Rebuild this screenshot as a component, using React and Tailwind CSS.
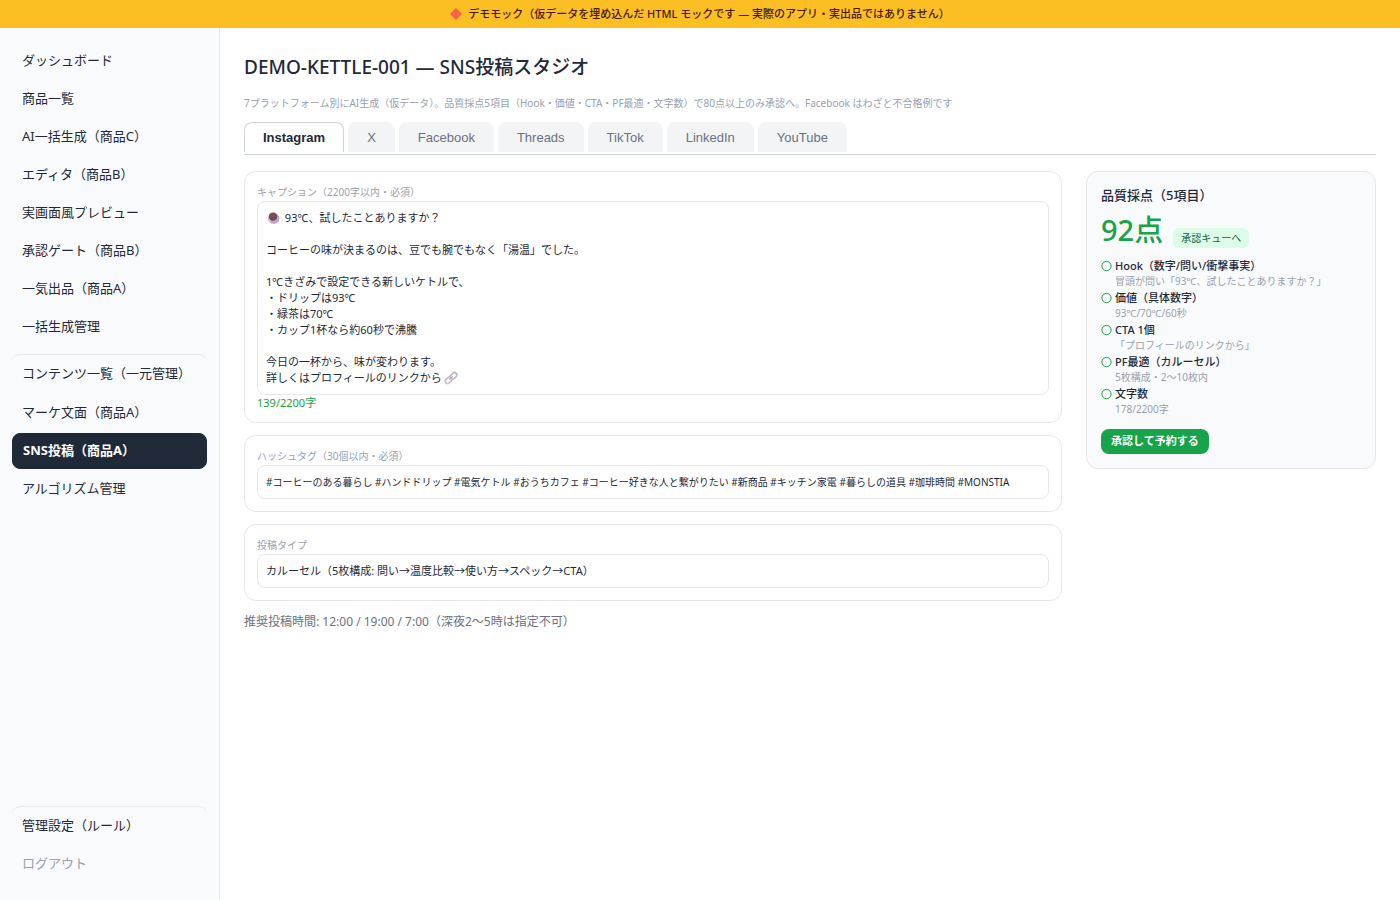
import { useState } from "react";

const mainLinks = [
  "ダッシュボード",
  "商品一覧",
  "AI一括生成（商品C）",
  "エディタ（商品B）",
  "実画面風プレビュー",
  "承認ゲート（商品B）",
  "一気出品（商品A）",
  "一括生成管理",
];

const tabs = ["Instagram", "X", "Facebook", "Threads", "TikTok", "LinkedIn", "YouTube"];

const checks = [
  { title: "Hook（数字/問い/衝撃事実）", detail: "冒頭が問い「93℃、試したことありますか？」" },
  { title: "価値（具体数字）", detail: "93℃/70℃/60秒" },
  { title: "CTA 1個", detail: "「プロフィールのリンクから」" },
  { title: "PF最適（カルーセル）", detail: "5枚構成・2〜10枚内" },
  { title: "文字数", detail: "178/2200字" },
];

function NavLink({ children, className = "h-9 text-gray-800" }) {
  return (
    <a href="#" className={`flex items-center rounded-lg px-2.5 ${className}`}>
      {children}
    </a>
  );
}

function BeanIcon() {
  return (
    <svg viewBox="0 0 14 14" className="mr-0.5 inline-block size-3.5 align-[-3px]" aria-hidden="true">
      <circle cx="7.8" cy="7.4" r="5.6" fill="#b9a8cb" />
      <path d="M2.2 7.5a5.600 5.600 0 0 0 7.200 5.300C6.500 12 4 10 3 6Z" fill="#cbbfda" />
      <circle cx="7" cy="5.600" r="4.200" fill="#704a55" />
      <circle cx="6.800" cy="5" r="2.600" fill="#7d4f4c" />
    </svg>
  );
}

function ChainIcon() {
  return (
    <svg viewBox="0 0 14 14" className="ml-0.5 inline-block size-3.5 align-[-3px]" fill="none" strokeWidth="1.7" aria-hidden="true">
      <rect x="5.800" y="2.600" width="7.400" height="4.600" rx="2.300" transform="rotate(-45 9.500 4.900)" stroke="#c0b2cb" />
      <rect x="0.900" y="6.900" width="7.400" height="4.600" rx="2.300" transform="rotate(-45 4.600 9.200)" stroke="#c9bcd2" />
      <path d="M5.400 8.600 8.600 5.400" stroke="#b3a4c0" strokeWidth="1.200" />
    </svg>
  );
}

function Card({ children }) {
  return <div className="rounded-xl border border-gray-200 bg-white p-3">{children}</div>;
}

const labelClass = "block text-[10px] leading-[17px] text-gray-400";
const fieldClass = "block w-full rounded-lg border border-gray-200 bg-white px-2 py-2 leading-4 text-gray-800";

function App() {
  const [active, setActive] = useState("Instagram");
  return (
    <div className="flex min-h-screen flex-col bg-white font-['Noto_Sans','Noto_Sans_CJK_JP',sans-serif] text-gray-800">
      <div className="flex h-7 items-center justify-center gap-1.5 bg-[#fbbf24] text-[11px] font-medium text-amber-950">
        <svg viewBox="0 0 12 12" className="size-3" aria-hidden="true">
          <path d="M6 0 12 6 6 12 0 6Z" fill="#f2644b" />
        </svg>
        <span>デモモック（仮データを埋め込んだ HTML モックです — 実際のアプリ・実出品ではありません）</span>
      </div>

      <div className="flex flex-1">
        <nav className="flex w-[220px] shrink-0 flex-col gap-0.5 border-r border-gray-200 bg-gray-50 px-3 pt-[15px] pb-[18px] text-[13px]">
          {mainLinks.map((link) => (
            <NavLink key={link}>{link}</NavLink>
          ))}
          <NavLink className="mt-[7px] h-[39px] border-t border-gray-200 text-gray-800">コンテンツ一覧（一元管理）</NavLink>
          <NavLink>マーケ文面（商品A）</NavLink>
          <NavLink className="h-9 border border-[#1f2937] bg-[#1f2937] font-bold text-white">SNS投稿（商品A）</NavLink>
          <NavLink>アルゴリズム管理</NavLink>
          <NavLink className="mt-auto h-[38px] border-t border-gray-200 text-gray-800">管理設定（ルール）</NavLink>
          <NavLink className="h-9 text-gray-400">ログアウト</NavLink>
        </nav>

        <main className="min-w-0 flex-1 p-6">
          <h1 className="text-[19px] leading-[30px] font-medium">DEMO-KETTLE-001 — SNS投稿スタジオ</h1>
          <p className="mt-[13px] text-[10px] leading-4 text-gray-400">
            7プラットフォーム別にAI生成（仮データ）。品質採点5項目（Hook・価値・CTA・PF最適・文字数）で80点以上のみ承認へ。Facebook はわざと不合格例です
          </p>

          <div className="mt-[11px] mb-4 flex gap-1 border-b border-gray-300 pb-0.5 font-['Liberation_Sans',sans-serif] text-[13px]">
            {tabs.map((tab) => (
              <button
                key={tab}
                type="button"
                onClick={() => setActive(tab)}
                className={`h-[30px] rounded-t-lg border border-b-0 px-[18px] ${
                  tab === active
                    ? "border-gray-300 bg-white font-bold text-gray-800"
                    : "border-gray-100 bg-gray-100 text-gray-500"
                }`}
              >
                {tab}
              </button>
            ))}
          </div>

          <div className="flex items-start gap-6">
            <div className="flex min-w-0 flex-1 flex-col gap-3">
              <Card>
                <span id="caption-label" className={labelClass}>キャプション（2200字以内・必須）</span>
                <div
                  role="textbox"
                  aria-multiline="true"
                  aria-labelledby="caption-label"
                  contentEditable
                  suppressContentEditableWarning
                  className={`${fieldClass} text-[11px] whitespace-pre-line`}
                >
                  <BeanIcon /> 93℃、試したことありますか？{"\n\n"}
                  コーヒーの味が決まるのは、豆でも腕でもなく「湯温」でした。{"\n\n"}
                  1℃きざみで設定できる新しいケトルで、{"\n"}
                  ・ドリップは93℃{"\n"}
                  ・緑茶は70℃{"\n"}
                  ・カップ1杯なら約60秒で沸騰{"\n\n"}
                  今日の一杯から、味が変わります。{"\n"}
                  詳しくはプロフィールのリンクから<ChainIcon />
                </div>
                <div className="text-[11px] leading-[15px] text-[#16a34a]">139/2200字</div>
              </Card>

              <Card>
                <label htmlFor="hashtags" className={labelClass}>ハッシュタグ（30個以内・必須）</label>
                <input
                  id="hashtags"
                  type="text"
                  className={`${fieldClass} text-[10px]`}
                  defaultValue="#コーヒーのある暮らし #ハンドドリップ #電気ケトル #おうちカフェ #コーヒー好きな人と繋がりたい #新商品 #キッチン家電 #暮らしの道具 #珈琲時間 #MONSTIA"
                />
              </Card>

              <Card>
                <label htmlFor="post-type" className={labelClass}>投稿タイプ</label>
                <input
                  id="post-type"
                  type="text"
                  className={`${fieldClass} text-[11px]`}
                  defaultValue="カルーセル（5枚構成: 問い→温度比較→使い方→スペック→CTA）"
                />
              </Card>

              <p className="text-[12px] leading-[18px] text-gray-500">推奨投稿時間: 12:00 / 19:00 / 7:00（深夜2〜5時は指定不可）</p>
            </div>

            <aside className="w-[290px] shrink-0 rounded-xl border border-gray-200 bg-gray-50 p-3.5">
              <h2 className="text-[13px] leading-[18px] font-medium">品質採点（5項目）</h2>
              <div className="mt-1.5 flex items-end gap-2.5">
                <span className="text-[29px] leading-10 font-medium text-[#16a34a]">92点</span>
                <span className="mb-0.5 rounded-md bg-[#dcfce7] px-2 text-[10px] leading-5 text-[#166534]">承認キューへ</span>
              </div>
              <ul className="mt-2 flex flex-col gap-px text-[11px]">
                {checks.map((check) => (
                  <li key={check.title} className="flex gap-[3px]">
                    <svg viewBox="0 0 11 16" className="h-4 w-[11px] shrink-0" aria-hidden="true">
                      <circle cx="5.500" cy="8" r="4.600" fill="none" stroke="#16a34a" />
                    </svg>
                    <div>
                      <div className="leading-4 font-medium">{check.title}</div>
                      <div className="text-[10px] leading-[15px] text-gray-400">{check.detail}</div>
                    </div>
                  </li>
                ))}
              </ul>
              <button type="button" className="mt-3 h-[25px] rounded-lg bg-[#16a34a] px-2.5 text-[11px] font-bold text-white">
                承認して予約する
              </button>
            </aside>
          </div>
        </main>
      </div>
    </div>
  );
}

export default App;
